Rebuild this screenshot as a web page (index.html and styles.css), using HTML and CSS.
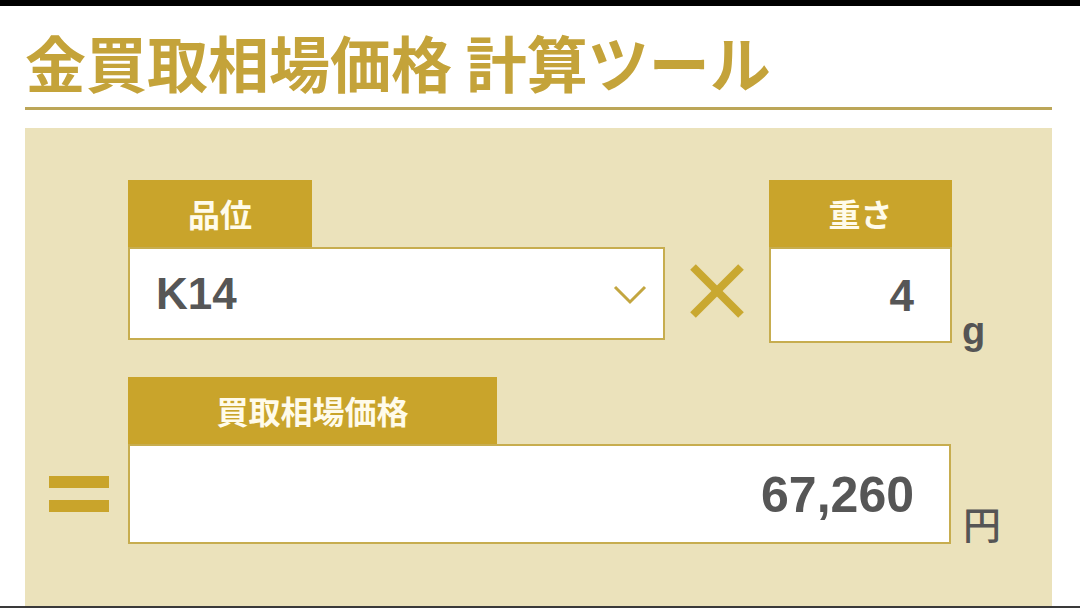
FILE: index.html
```
<!DOCTYPE html>
<html lang="ja">
<head>
  <meta charset="utf-8">
  <link rel="stylesheet" href="styles.css">
</head>
<body>
  <div class="topbar"></div>

  <div class="page">
    <h1 class="title">金買取相場価格 計算ツール</h1>

    <div class="calc-panel">
      <!-- grade x weight -->
      <div class="calc-row input-row">
        <div class="operator"></div>

        <div class="field field-grade">
          <div class="field-tab">品位</div>
          <div class="field-box select-box">
            <span class="field-value">K14</span>
            <svg class="chevron" width="34" height="20" viewBox="0 0 34 20">
              <polyline points="2,2 17,17 32,2" fill="none" stroke="#c3a640" stroke-width="3"/>
            </svg>
          </div>
        </div>

        <div class="times">
          <svg width="56" height="56" viewBox="0 0 56 56">
            <line x1="4" y1="4" x2="52" y2="52" stroke="#c9a830" stroke-width="8"/>
            <line x1="52" y1="4" x2="4" y2="52" stroke="#c9a830" stroke-width="8"/>
          </svg>
        </div>

        <div class="field field-weight">
          <div class="field-tab">重さ</div>
          <div class="field-box number-box">
            <span class="field-value">4</span>
          </div>
        </div>

        <span class="unit unit-g">g</span>
      </div>

      <!-- result -->
      <div class="calc-row result-row">
        <div class="operator">
          <div class="equals">
            <span></span>
            <span></span>
          </div>
        </div>

        <div class="field field-result">
          <div class="field-tab">買取相場価格</div>
          <div class="field-box result-box">
            <span class="field-value result-value">67,260</span>
          </div>
        </div>

        <span class="unit unit-yen">円</span>
      </div>
    </div>
  </div>

  <div class="bottombar"></div>
</body>
</html>
```

FILE: styles.css
```
body {
  margin: 0;
  background: #fff;
  font-family: "Noto Sans CJK JP", sans-serif;
  color: #555;
  width: 1080px;
  height: 608px;
  overflow: hidden;
}

.topbar {
  height: 6px;
  background: #000;
}

.bottombar {
  height: 2px;
  background: #3a3a3a;
}

.page {
  padding: 0 28px 0 25px;
}

.title {
  margin: 26px 0 0;
  padding: 0 0 15px 0;
  font-size: 61px;
  line-height: 60px;
  font-weight: 700;
  color: #c4a33a;
  border-bottom: 3px solid #bca658;
  white-space: nowrap;
}

.calc-panel {
  margin-top: 18px;
  height: 478px;
  box-sizing: border-box;
  padding-top: 52px;
  background: #ebe2bb;
}

.calc-row {
  display: flex;
  align-items: flex-end;
}

.input-row {
  align-items: flex-start;
}

.result-row {
  margin-top: 34px;
}

.operator {
  width: 103px;
  flex-shrink: 0;
  align-self: flex-end;
}

.field {
  display: flex;
  flex-direction: column;
  align-items: flex-start;
  flex-shrink: 0;
}

.field-tab {
  height: 67px;
  line-height: 67px;
  text-align: center;
  background: #c9a42b;
  color: #fffbea;
  font-size: 32px;
  font-weight: 700;
}

.field-box {
  box-sizing: border-box;
  width: 100%;
  display: flex;
  align-items: center;
  background: #fff;
  border: 2px solid #c7ad4f;
}

.field-value {
  font-family: "Liberation Sans", "Noto Sans CJK JP", sans-serif;
  font-weight: 700;
  font-size: 44px;
  line-height: 1;
  color: #565656;
  padding-top: 1px;
}

/* grade select */
.field-grade {
  width: 537px;
}

.field-grade .field-tab {
  width: 184px;
}

.select-box {
  height: 93px;
  justify-content: space-between;
  padding: 0 16px 0 26px;
}

.chevron {
  display: block;
  margin-top: 2px;
}

.times {
  width: 104px;
  height: 93px;
  margin-top: 67px;
  flex-shrink: 0;
  display: flex;
  align-items: center;
  justify-content: center;
}

.times svg {
  display: block;
  margin-bottom: 6px;
}

/* weight input */
.field-weight {
  width: 183px;
}

.field-weight .field-tab {
  width: 183px;
}

.number-box {
  height: 96px;
  justify-content: flex-end;
  padding-right: 36px;
}

.unit {
  flex-shrink: 0;
  line-height: 1;
  color: #555;
}

.unit-g {
  align-self: flex-end;
  margin-left: 10px;
  margin-bottom: -7px;
  font-family: "Liberation Sans", sans-serif;
  font-weight: 700;
  font-size: 38px;
}

/* result */
.equals {
  height: 100px;
  padding-left: 24px;
  display: flex;
  flex-direction: column;
  justify-content: center;
  gap: 12px;
}

.equals span {
  display: block;
  width: 60px;
  height: 12px;
  background: #c9a42b;
}

.field-result {
  width: 823px;
}

.field-result .field-tab {
  width: 369px;
}

.result-box {
  height: 100px;
  justify-content: flex-end;
  padding-right: 35px;
}

.result-value {
  font-size: 50px;
  padding-top: 2px;
}

.unit-yen {
  margin-left: 12px;
  margin-bottom: 2px;
  font-size: 38px;
  font-weight: 500;
}
```
